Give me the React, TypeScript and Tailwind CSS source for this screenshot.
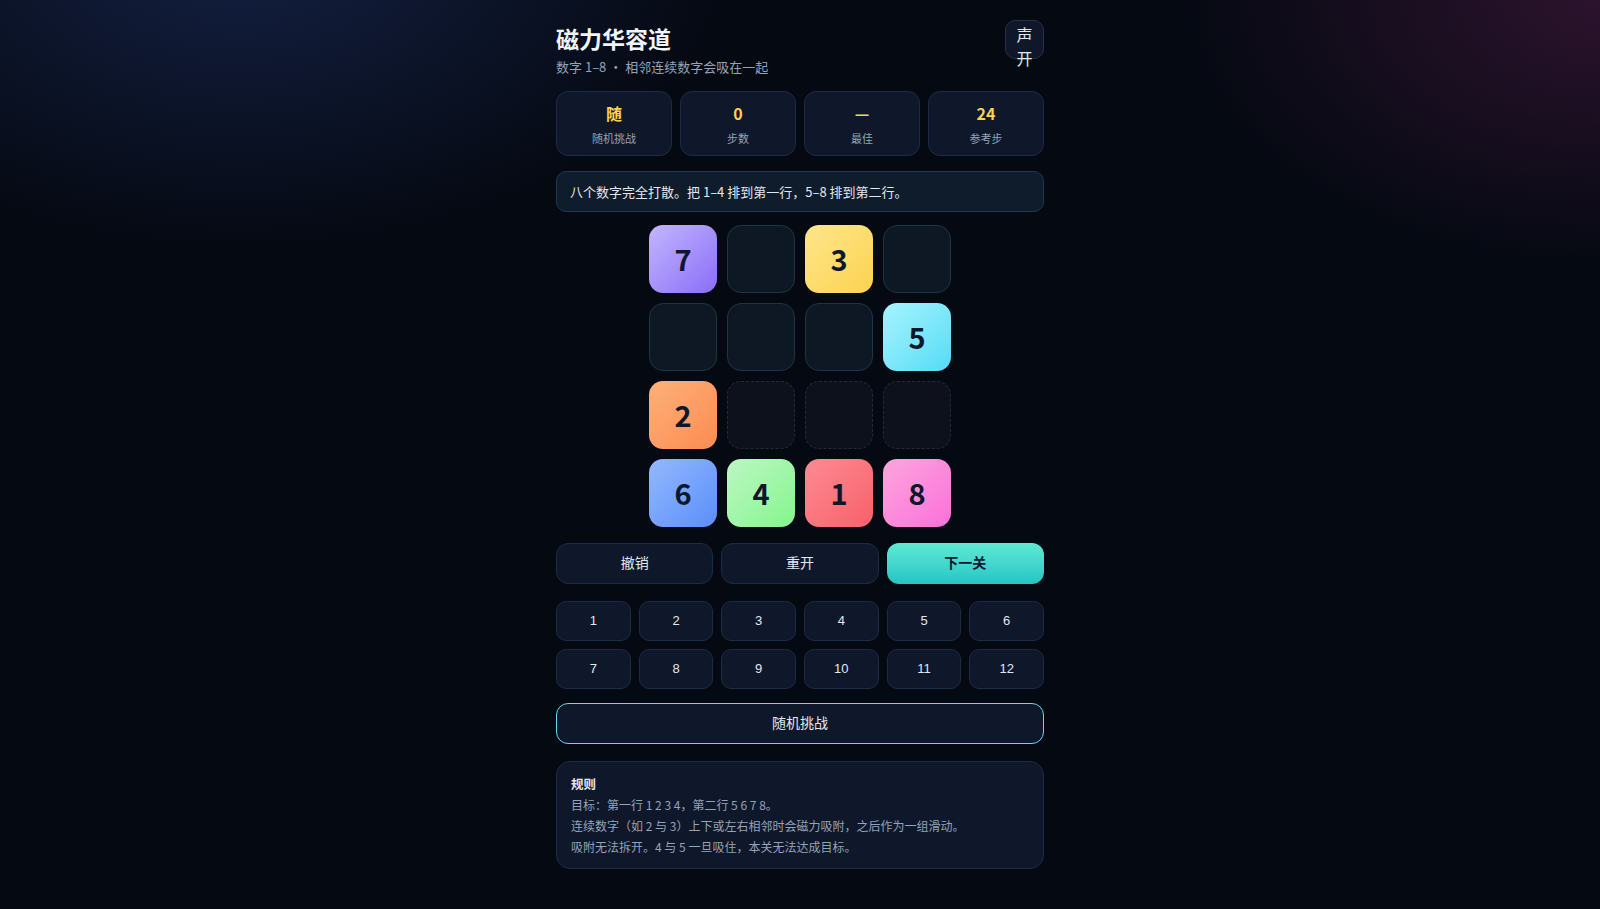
import React from "react";

const cjk = { fontFamily: '"Noto Sans CJK SC", "Noto Sans", sans-serif' };
const btnFont = { fontFamily: '"Liberation Sans", Arial, "Noto Sans CJK SC", sans-serif' };

type Cell = { n?: number; kind: "tile" | "goal" | "empty" };

const tileStyle: Record<number, string> = {
  7: "bg-gradient-to-br from-[#c4b5fd] to-[#8b6cf7]",
  3: "bg-gradient-to-br from-[#fde68a] to-[#fcd34d]",
  5: "bg-gradient-to-br from-[#a5f3fc] to-[#4fdcf7]",
  2: "bg-gradient-to-br from-[#fdb07a] to-[#fb8c50]",
  6: "bg-gradient-to-br from-[#93b8fd] to-[#5b8ef9]",
  4: "bg-gradient-to-br from-[#bbf7c4] to-[#84f58c]",
  1: "bg-gradient-to-br from-[#fc8a94] to-[#f8606a]",
  8: "bg-gradient-to-br from-[#fca5dc] to-[#fa6fd9]",
};

const cells: Cell[] = [
  { n: 7, kind: "tile" }, { kind: "goal" }, { n: 3, kind: "tile" }, { kind: "goal" },
  { kind: "goal" }, { kind: "goal" }, { kind: "goal" }, { n: 5, kind: "tile" },
  { n: 2, kind: "tile" }, { kind: "empty" }, { kind: "empty" }, { kind: "empty" },
  { n: 6, kind: "tile" }, { n: 4, kind: "tile" }, { n: 1, kind: "tile" }, { n: 8, kind: "tile" },
];

const stats = [
  { v: "随", l: "随机挑战" },
  { v: "0", l: "步数" },
  { v: "—", l: "最佳" },
  { v: "24", l: "参考步" },
];

export default function App() {
  return (
    <div
      className="min-h-[909px] w-full bg-[#050912]"
      style={{
        ...cjk,
        backgroundImage:
          "radial-gradient(ellipse 700px 420px at 15% -5%, rgba(22,36,74,0.85), rgba(5,9,18,0) 70%), radial-gradient(ellipse 600px 380px at 100% 0%, rgba(48,20,48,0.9), rgba(5,9,18,0) 70%)",
      }}
    >
      <div className="flex justify-center">
        <div className="w-[488px] pt-[20px] pb-[40px]">
          {/* Header */}
          <div className="flex items-start justify-between">
            <div>
              <h1 className="text-[23px] font-bold leading-[32px] text-[#f1f5f9] mt-[2px]">磁力华容道</h1>
              <p className="text-[13px] leading-[18px] text-[#94a3b8] mt-[3.5px]">数字 1–8 · 相邻连续数字会吸在一起</p>
            </div>
            <div className="h-[39px] w-[39px] rounded-[10px] border border-[#26324a] bg-[#0f172a] text-[16px] leading-[24px] text-[#e2e8f0] text-center pt-[1px]">
              声<br />开
            </div>
          </div>

          {/* Stats */}
          <div className="mt-[15.5px] grid grid-cols-4 gap-[8px]">
            {stats.map((s) => (
              <div key={s.l} className="h-[65px] rounded-[12px] border border-[#1f2a44] bg-[#0f172a] flex flex-col items-center pt-[9px]">
                <div className="text-[16px] font-bold leading-[24px] text-[#fcd34d]">{s.v}</div>
                <div className="text-[11px] leading-[16px] text-[#94a3b8] mt-[5px]">{s.l}</div>
              </div>
            ))}
          </div>

          {/* Message */}
          <div className="mt-[15px] h-[41px] rounded-[10px] border border-[#1d3a4a] bg-[#0f1c2b] px-[13px] flex items-center text-[13px] text-[#e2e8f0]">
            八个数字完全打散。把 1–4 排到第一行，5–8 排到第二行。
          </div>

          {/* Board */}
          <div className="mt-[13px] flex justify-center">
            <div className="grid grid-cols-4 gap-[10px] w-[302px]">
              {cells.map((c, i) =>
                c.kind === "tile" ? (
                  <div
                    key={i}
                    className={`h-[68px] rounded-[14px] flex items-center justify-center text-[29px] font-bold text-[#0f172a] ${tileStyle[c.n!]}`}
                  >
                    {c.n}
                  </div>
                ) : c.kind === "goal" ? (
                  <div key={i} className="h-[68px] rounded-[14px] border border-[#1c3645] bg-[#0d1824]" />
                ) : (
                  <div key={i} className="h-[68px] rounded-[14px] border border-dashed border-[#242a3a] bg-[#0d111c]" />
                )
              )}
            </div>
          </div>

          {/* Actions */}
          <div className="mt-[16px] grid grid-cols-3 gap-[8px]">
            <button className="h-[41px] rounded-[12px] border border-[#1f2a44] bg-[#0f172a] text-[14px] text-[#e2e8f0]" style={btnFont}>撤销</button>
            <button className="h-[41px] rounded-[12px] border border-[#1f2a44] bg-[#0f172a] text-[14px] text-[#e2e8f0]" style={btnFont}>重开</button>
            <button className="h-[41px] rounded-[12px] bg-gradient-to-b from-[#5eead4] to-[#22c5c5] text-[14px] font-bold text-[#0f172a]" style={btnFont}>下一关</button>
          </div>

          {/* Levels */}
          <div className="mt-[17px] grid grid-cols-6 gap-[8px]">
            {Array.from({ length: 12 }, (_, i) => (
              <button
                key={i}
                className="h-[40px] rounded-[10px] border border-[#1f2a44] bg-[#0f172a] text-[13px] text-[#e2e8f0]"
                style={btnFont}
              >
                {i + 1}
              </button>
            ))}
          </div>

          {/* Random */}
          <button
            className="mt-[14px] w-full h-[41px] rounded-[12px] border border-[#67d8f0] bg-[#0f172a] text-[14px] text-[#e2e8f0]"
            style={btnFont}
          >
            随机挑战
          </button>

          {/* Rules */}
          <div className="mt-[17px] rounded-[14px] border border-[#1f2a44] bg-[#0f172a] px-[14px] pt-[11px] pb-[11px]">
            <div className="text-[12.5px] font-bold leading-[21px] text-[#e2e8f0]">规则</div>
            <div className="text-[12px] leading-[21px] text-[#94a3b8]">
              <div>目标：第一行 1 2 3 4，第二行 5 6 7 8。</div>
              <div>连续数字（如 2 与 3）上下或左右相邻时会磁力吸附，之后作为一组滑动。</div>
              <div>吸附无法拆开。4 与 5 一旦吸住，本关无法达成目标。</div>
            </div>
          </div>
        </div>
      </div>
    </div>
  );
}
